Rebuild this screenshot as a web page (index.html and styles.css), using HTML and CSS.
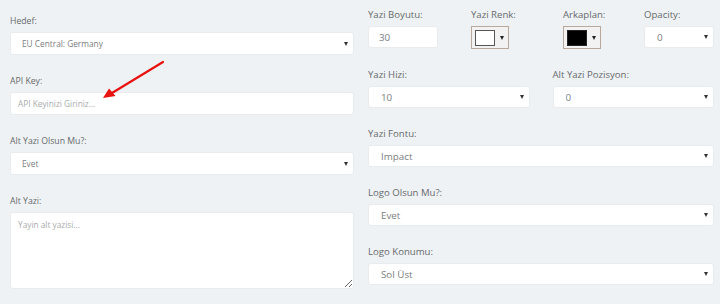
FILE: index.html
```html
<!DOCTYPE html>
<html lang="tr">
<head>
  <meta charset="UTF-8">
  <meta name="viewport" content="width=device-width, initial-scale=1.0">
  <title>Yayin Ayarlari</title>
  <link rel="stylesheet" href="styles.css">
</head>
<body>
  <div class="settings">
    <div class="col col-left">
      <div class="form-group">
        <label class="form-label">Hedef:</label>
        <div class="select-wrap">
          <select class="control">
            <option>EU Central: Germany</option>
          </select>
        </div>
      </div>
      <div class="form-group">
        <label class="form-label">API Key:</label>
        <input class="control control-text" type="text" placeholder="API Keyinizi Giriniz...">
      </div>
      <div class="form-group">
        <label class="form-label">Alt Yazi Olsun Mu?:</label>
        <div class="select-wrap">
          <select class="control">
            <option>Evet</option>
          </select>
        </div>
      </div>
      <div class="form-group">
        <label class="form-label">Alt Yazi:</label>
        <textarea class="control control-area" placeholder="Yayin alt yazisi..."></textarea>
      </div>
    </div>

    <div class="col col-right">
      <div class="row row-four">
        <div class="form-group">
          <label class="form-label">Yazi Boyutu:</label>
          <input class="control control-num" type="text" value="30">
        </div>
        <div class="form-group">
          <label class="form-label">Yazi Renk:</label>
          <button class="color-btn" type="button"><span class="swatch swatch-white"></span><span class="color-caret"></span></button>
        </div>
        <div class="form-group">
          <label class="form-label">Arkaplan:</label>
          <button class="color-btn" type="button"><span class="swatch swatch-black"></span><span class="color-caret"></span></button>
        </div>
        <div class="form-group">
          <label class="form-label">Opacity:</label>
          <div class="select-wrap">
            <select class="control">
              <option>0</option>
            </select>
          </div>
        </div>
      </div>
      <div class="row row-two">
        <div class="form-group">
          <label class="form-label">Yazi Hizi:</label>
          <div class="select-wrap">
            <select class="control">
              <option>10</option>
            </select>
          </div>
        </div>
        <div class="form-group">
          <label class="form-label">Alt Yazi Pozisyon:</label>
          <div class="select-wrap">
            <select class="control">
              <option>0</option>
            </select>
          </div>
        </div>
      </div>
      <div class="form-group">
        <label class="form-label">Yazi Fontu:</label>
        <div class="select-wrap">
          <select class="control">
            <option>Impact</option>
          </select>
        </div>
      </div>
      <div class="form-group">
        <label class="form-label">Logo Olsun Mu?:</label>
        <div class="select-wrap">
          <select class="control">
            <option>Evet</option>
          </select>
        </div>
      </div>
      <div class="form-group">
        <label class="form-label">Logo Konumu:</label>
        <div class="select-wrap">
          <select class="control">
            <option>Sol Üst</option>
          </select>
        </div>
      </div>
    </div>
  </div>

  <!-- annotation arrow pointing at the API key field -->
  <svg class="pointer" width="720" height="304" viewBox="0 0 720 304">
    <line x1="163" y1="62" x2="112" y2="93" stroke="#e8120f" stroke-width="2.2" stroke-linecap="round"/>
    <polygon points="103,98 109,88.5 115.5,96" fill="#e8120f"/>
  </svg>
</body>
</html>
```

FILE: styles.css
```css
body {
  margin: 0;
  background: #eff2f4;
  font-family: 'Open Sans', 'Liberation Sans', Arial, sans-serif;
  color: #555;
  position: relative;
  height: 304px;
  overflow: hidden;
}
.settings {
  display: grid;
  grid-template-columns: 344px 346px;
  column-gap: 14px;
  padding: 0 6px 0 10px;
}
.col-left {
  padding-top: 13px;
}
.col-right {
  padding-top: 7px;
}
.form-group {
  display: flex;
  flex-direction: column;
  margin-bottom: 18px;
}
.form-label {
  font-size: 9.6px;
  line-height: 16px;
  color: #666a6d;
  margin-bottom: 3px;
}
.col-left .form-label {
  font-size: 8.7px;
}
.control {
  display: block;
  box-sizing: border-box;
  width: 100%;
  height: 22px;
  margin: 0;
  padding: 0 12px;
  border: 1px solid #e9ecee;
  border-radius: 3px;
  background: #fff;
  font-family: inherit;
  font-size: 9.8px;
  color: #7b7e80;
  outline: none;
  -webkit-appearance: none;
  appearance: none;
}
.control::placeholder {
  color: #a9acae;
}
.col-left .control {
  height: 23px;
  font-size: 8.3px;
  padding: 0 11px;
}
.col-left .control-text {
  padding: 0 7px;
}
.control-num {
  width: 70px;
  padding-left: 10px;
}
.col-left .control-area {
  height: 77px;
  padding: 5px 7px;
  resize: vertical;
  line-height: 13px;
}
.col-left .form-group:last-child {
  margin-bottom: 0;
}
.select-wrap {
  position: relative;
}
.select-wrap::after {
  content: '';
  position: absolute;
  right: 6px;
  top: 50%;
  margin-top: -2px;
  border-left: 2.5px solid transparent;
  border-right: 2.5px solid transparent;
  border-top: 4px solid #333;
  pointer-events: none;
}
.row {
  display: grid;
}
.row-four {
  grid-template-columns: 103px 92px 81px 1fr;
}
.row-two {
  grid-template-columns: 1fr 1fr;
  column-gap: 23px;
}
.color-btn {
  box-sizing: border-box;
  width: 38px;
  height: 23px;
  margin: 0;
  padding: 0 0 0 3px;
  border: 1px solid #b8a99a;
  background: #f2f2f2;
  display: flex;
  align-items: center;
  gap: 5px;
  cursor: pointer;
}
.swatch {
  box-sizing: border-box;
  width: 20px;
  height: 16px;
  border: 1px solid #555;
}
.swatch-white {
  background: #fff;
}
.swatch-black {
  background: #000;
  border-color: #222;
}
.color-caret {
  border-left: 2.5px solid transparent;
  border-right: 2.5px solid transparent;
  border-top: 4px solid #222;
}
.pointer {
  position: absolute;
  left: 0;
  top: 0;
  pointer-events: none;
}
```
